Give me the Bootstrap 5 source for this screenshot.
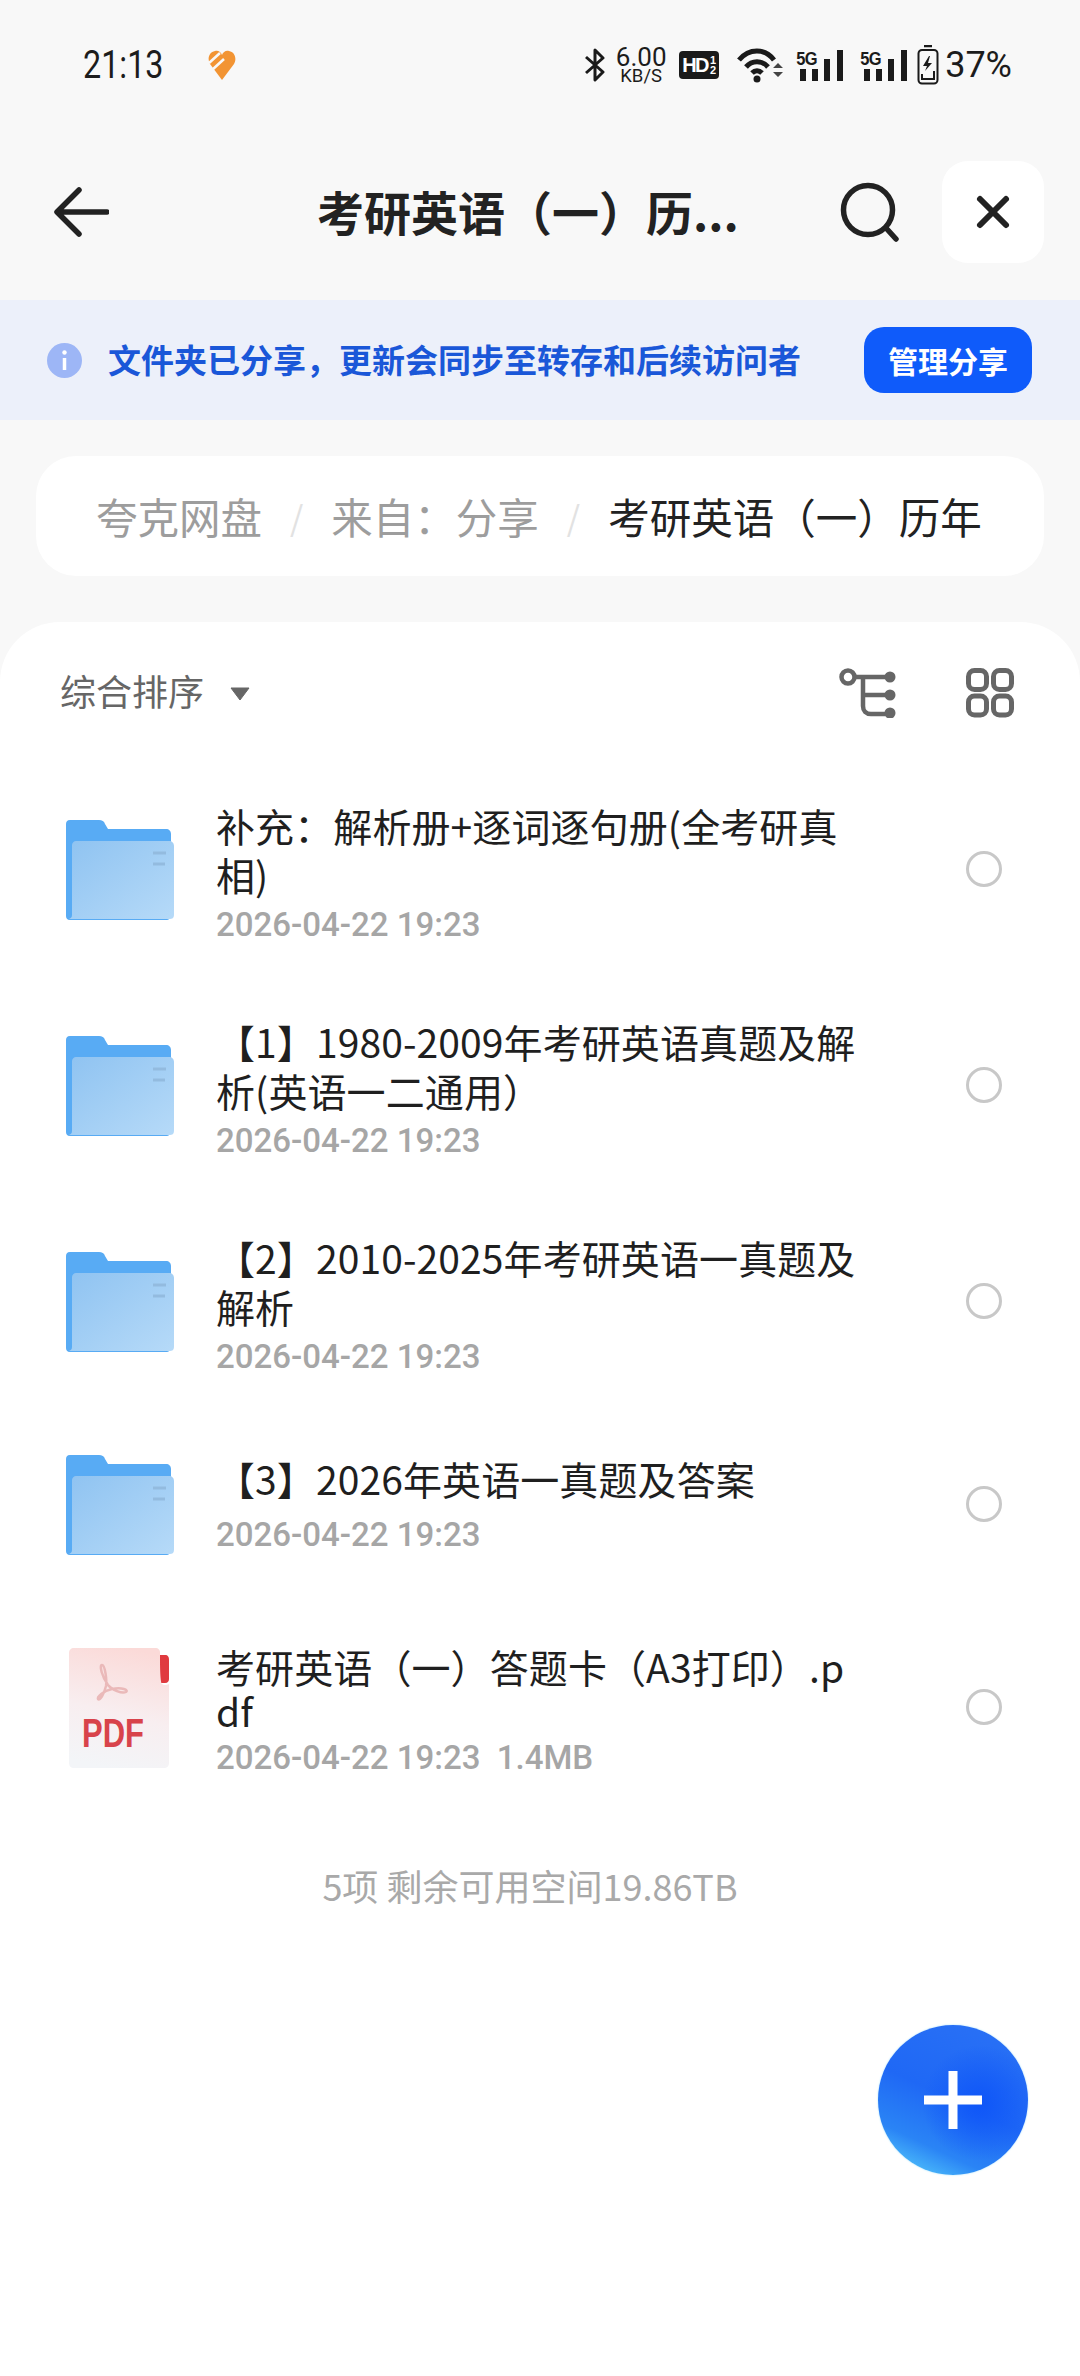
<!DOCTYPE html>
<html lang="zh-CN">
<head>
    <meta charset="UTF-8">
    <meta name="viewport" content="width=device-width, initial-scale=1.0">
    <title>考研英语（一）历年</title>
    <link href="https://cdn.jsdelivr.net/npm/bootstrap@5.3.3/dist/css/bootstrap.min.css" rel="stylesheet">
    <style>
        body {
            background: #f8f8f8;
            color: #222;
            font-family: "Noto Sans CJK SC", "Noto Sans", sans-serif;
            overflow: hidden;
        }
        .page-wrap { height: 2376px; }

        /* status bar */
        .status-bar { height: 124px; padding: 6px 68px 0 83px; }
        .status-time { font-family: Roboto, sans-serif; font-size: 38px; width: 125px; color: #1c1c1c; transform: scaleX(.85); transform-origin: left center; }
        .status-right { gap: 12px; }
        .speed { font-family: Roboto, sans-serif; width: 52px; margin-left: -3px; color: #1c1c1c; }
        .speed-num { font-size: 26px; line-height: 21px; }
        .speed-unit { font-size: 18.5px; line-height: 16px; }
        .hd-badge {
            width: 40px; height: 28px; background: #1a1a1a; color: #fff; border-radius: 4px; overflow: hidden;
            font: 700 20px/28px "Liberation Sans", sans-serif; letter-spacing: -1.5px;
        }
        .hd-frac { font-size: 11px; line-height: 10px; letter-spacing: 0; margin-left: 2px; }
        .wifi-ico { margin-left: 6px; }
        .sig-wrap { width: 48px; height: 32px; margin-left: 1px; }
        .sig-wrap + .sig-wrap { margin-left: 4px; }
        .sig-label { font: 700 16.5px/1 "Liberation Sans", sans-serif; left: 0; top: 0; letter-spacing: -.5px; color: #1a1a1a; transform: scaleY(1.15); transform-origin: left top; }
        .batt-ico { margin-left: -3px; }
        .batt-text { font-family: Roboto, sans-serif; font-size: 36px; color: #1c1c1c; margin-left: -6px; }

        /* title bar */
        .title-bar { height: 176px; padding: 0 36px 0 53px; }
        .page-title { font-size: 47px; font-weight: 700; margin-top: -2px; margin-left: 208px; width: 480px; white-space: nowrap; }
        .close-btn { width: 102px; height: 102px; border-radius: 26px; background: #fff; margin-left: 42px; }

        /* share banner */
        .share-bar { height: 120px; background: #ecf0fa; padding: 0 48px 0 47px; }
        .share-text { color: #1a57d8; font-size: 33px; font-weight: 700; margin-left: 26px; }
        .share-btn {
            width: 168px; height: 66px; background: #0f5bfa; color: #fff; border-radius: 20px; border: 0;
            font-size: 30px; font-weight: 700; padding: 0; white-space: nowrap;
        }

        /* breadcrumb */
        .path-bar {
            height: 120px; margin: 36px 36px 0; background: #fff; border-radius: 40px; padding: 0 60px;
            font-size: 41.5px; white-space: nowrap;
        }
        .path-muted { color: #9d9d9d; }
        .path-sep { color: #e2e2e2; font-size: 34px; margin: 0 28px; }
        .path-on { color: #222; }

        /* file sheet */
        .file-sheet { background: #fff; border-radius: 60px 60px 0 0; margin-top: 46px; }
        .sort-row { height: 142px; padding: 0 66px 0 60px; color: #666; font-size: 36px; }
        .sort-label { margin-top: -6px; }
        .sort-arrow { margin-left: 26px; }
        .grid-ico { margin-left: 69px; }
        .file-list { margin-top: -2px; }
        .file-row { height: 216px; padding: 0 78px 0 66px; border: 0; }
        .file-row.single { height: 190px; }
        .file-row.single .file-info { margin-top: 0; }
        .file-row.single .file-date { margin-top: 10px; }
        .file-row.tight .file-name { line-height: 44px; }
        .file-icon { width: 108px; flex: none; }
        .file-info { width: 648px; margin: 8px 0 0 42px; }
        .file-name { font-size: 39px; line-height: 49px; color: #1f1f1f; letter-spacing: .1px; word-break: break-all; }
        .file-date { font-family: Roboto, sans-serif; font-size: 33px; font-weight: 500; line-height: 44px; margin-top: 4px; color: #a6a6a6; white-space: pre; }
        .pick-dot { width: 36px; height: 36px; border: 3px solid #c8c8c8; border-radius: 50%; flex: none; margin: -2px 0 0 auto; }
        .list-foot { font-size: 36px; color: #a9a9a9; margin-top: 42px; padding-right: 20px; }
        .add-btn {
            width: 150px; height: 150px; right: 52px; bottom: 201px; border-radius: 50%;
            background:
                radial-gradient(circle at 68% 52%, #0f56f8 0%, rgba(15, 86, 248, 0) 45%),
                linear-gradient(25deg, #53c8fb 6%, #2a84f5 24%, #1f68f5 50%, #2b72f5 100%);
            box-shadow: 0 0 2px #9fe0fb;
        }
    </style>
</head>
<body>
<svg width="0" height="0" class="position-absolute">
    <defs>
        <linearGradient id="folderFront" x1="0" y1="0" x2="1" y2="1">
            <stop offset="0" stop-color="#8fc3f1"/>
            <stop offset="1" stop-color="#b6daf8"/>
        </linearGradient>
        <linearGradient id="pdfPaper" x1="0.6" y1="0" x2="0.4" y2="1">
            <stop offset="0" stop-color="#fbdad8"/>
            <stop offset=".55" stop-color="#f8eef0"/>
            <stop offset="1" stop-color="#f3f5f8"/>
        </linearGradient>
        <symbol id="folder" viewBox="0 0 108 100">
            <path d="M4 0h29c3 0 5 1 6 4l3 5h58c3 0 5 2 5 5v81c0 3-2 5-5 5H4c-3 0-4-2-4-4V4c0-2 1-4 4-4z" fill="#58abf4"/>
            <path d="M10 21h93c3 0 5 2 5 5v69c0 3-2 4-4 4H3c3-1 3-3 3-5V25c0-2 2-4 4-4z" fill="url(#folderFront)"/>
            <path d="M87 33h13M87 44h12" stroke="#93bbdf" stroke-width="3"/>
        </symbol>
    </defs>
</svg>

<div class="page-wrap d-flex flex-column">
    <!-- status bar -->
    <div class="status-bar d-flex align-items-center">
        <span class="status-time">21:13</span>
        <svg width="28" height="30" viewBox="0 0 28 30"><path d="M14 30L2 14C-1 9 1 2 7 1c3-1 6 1 7 4 1-3 4-5 7-4 6 1 8 8 5 13z" fill="#f29433"/><path d="M1 13L12 3M4 20L16 9" stroke="#f8f8f8" stroke-width="2.6"/></svg>
        <div class="status-right d-flex align-items-center ms-auto">
            <svg width="22" height="34" viewBox="0 0 22 34"><path d="M2 9l17 15-8 8V2l8 8L2 25" fill="none" stroke="#1a1a1a" stroke-width="3" stroke-linejoin="round"/></svg>
            <div class="speed text-center"><div class="speed-num">6.00</div><div class="speed-unit">KB/S</div></div>
            <div class="hd-badge d-flex align-items-center justify-content-center">HD<span class="hd-frac">1<br>2</span></div>
            <svg class="wifi-ico" width="46" height="36" viewBox="0 0 46 36">
                <path d="M2 13c10-12 26-12 35 0M9 20c6-7 16-7 22 0M15 26c3-3 7-3 10 0" fill="none" stroke="#1a1a1a" stroke-width="5"/>
                <circle cx="20" cy="32" r="3.5" fill="#1a1a1a"/>
                <path d="M36 21l5-5 5 5zM36 25h10l-5 5z" fill="#444"/>
            </svg>
            <div class="sig-wrap position-relative">
                <span class="sig-label position-absolute">5G</span>
                <svg class="d-block" width="48" height="32" viewBox="0 0 48 32"><path d="M4 20h6v12H4zM16 20h6v12h-6zM28 10h6v22h-6zM41 1h6v31h-6z" fill="#1a1a1a"/></svg>
            </div>
            <div class="sig-wrap position-relative">
                <span class="sig-label position-absolute">5G</span>
                <svg class="d-block" width="48" height="32" viewBox="0 0 48 32"><path d="M4 20h6v12H4zM16 20h6v12h-6zM28 10h6v22h-6zM41 1h6v31h-6z" fill="#1a1a1a"/></svg>
            </div>
            <svg class="batt-ico" width="22" height="40" viewBox="0 0 22 40"><path d="M7 1h8" stroke="#1a1a1a" stroke-width="2.5"/><rect x="1.5" y="5" width="19" height="33.5" rx="3.5" fill="none" stroke="#1a1a1a" stroke-width="2"/><path d="M12 11l-6 10h4l-2 5 7-8h-4l2-7z" fill="#1a1a1a"/><path d="M5 29v5h12v-8" fill="none" stroke="#1a1a1a" stroke-width="2"/></svg>
            <span class="batt-text">37%</span>
        </div>
    </div>

    <!-- title bar -->
    <div class="title-bar d-flex align-items-center">
        <svg width="56" height="50" viewBox="0 0 56 50"><path d="M26 3L4 25l22 22M5 25h49" fill="none" stroke="#222" stroke-width="5.5" stroke-linecap="round" stroke-linejoin="round"/></svg>
        <div class="page-title">考研英语（一）历...</div>
        <svg width="60" height="60" viewBox="0 0 60 60" class="ms-auto"><circle cx="28" cy="28" r="24.5" fill="none" stroke="#222" stroke-width="5.5"/><path d="M46 46l10 11" stroke="#222" stroke-width="5.5" stroke-linecap="round"/></svg>
        <div class="close-btn d-flex align-items-center justify-content-center">
            <svg width="36" height="36" viewBox="0 0 36 36"><path d="M5 5l26 26M31 5L5 31" stroke="#222" stroke-width="6" stroke-linecap="round"/></svg>
        </div>
    </div>

    <!-- share banner -->
    <div class="share-bar d-flex align-items-center">
        <svg width="35" height="35" viewBox="0 0 35 35"><circle cx="17.5" cy="17.5" r="17.5" fill="#9db6f6"/><path d="M17.5 15v12" stroke="#fff" stroke-width="3.5"/><circle cx="17.5" cy="9.5" r="2.2" fill="#fff"/></svg>
        <div class="share-text">文件夹已分享，更新会同步至转存和后续访问者</div>
        <button class="share-btn btn ms-auto" type="button">管理分享</button>
    </div>

    <!-- breadcrumb -->
    <div class="path-bar d-flex align-items-center">
        <span class="path-muted">夸克网盘</span><span class="path-sep">/</span><span class="path-muted">来自：分享</span><span class="path-sep">/</span><span class="path-on">考研英语（一）历年</span>
    </div>

    <!-- files -->
    <div class="file-sheet flex-grow-1 position-relative">
        <div class="sort-row d-flex align-items-center">
            <span class="sort-label">综合排序</span>
            <svg class="sort-arrow" width="20" height="15" viewBox="0 0 20 15"><path d="M1 2h18l-9 12z" fill="#666" stroke="#666" stroke-width="1" stroke-linejoin="round"/></svg>
            <svg class="ms-auto" width="58" height="50" viewBox="0 0 58 50"><circle cx="9" cy="9" r="6.5" fill="none" stroke="#666" stroke-width="4.5"/><path d="M15 9h36M24 9v29c0 5 3 8 8 8h19M24 27h27" fill="none" stroke="#666" stroke-width="4.5"/><circle cx="51" cy="9" r="5.5" fill="#666"/><circle cx="51" cy="27" r="5.5" fill="#666"/><circle cx="51" cy="45" r="5.5" fill="#666"/></svg>
            <svg class="grid-ico" width="48" height="50" viewBox="0 0 48 50"><g fill="none" stroke="#666" stroke-width="5"><rect x="2.5" y="2.5" width="18" height="19" rx="6"/><rect x="27.5" y="2.5" width="18" height="19" rx="6"/><rect x="2.5" y="28" width="18" height="19" rx="6"/><rect x="27.5" y="28" width="18" height="19" rx="6"/></g></svg>
        </div>

        <div class="list-group list-group-flush file-list" id="file-list"></div>

        <div class="list-foot text-center">5项 剩余可用空间19.86TB</div>

        <div class="add-btn position-absolute d-flex align-items-center justify-content-center">
            <svg width="58" height="58" viewBox="0 0 58 58"><path d="M29 0v58M0 29h58" stroke="#fff" stroke-width="9"/></svg>
        </div>
    </div>
</div>

<script src="https://cdn.jsdelivr.net/npm/bootstrap@5.3.3/dist/js/bootstrap.bundle.min.js"></script>
<script>
    // file rows
    const files = [
        { name: "补充：解析册+逐词逐句册(全考研真相)", date: "2026-04-22 19:23" },
        { name: "【1】1980-2009年考研英语真题及解析(英语一二通用）", date: "2026-04-22 19:23" },
        { name: "【2】2010-2025年考研英语一真题及解析", date: "2026-04-22 19:23" },
        { name: "【3】2026年英语一真题及答案", date: "2026-04-22 19:23", extra: " single" },
        { name: "考研英语（一）答题卡（A3打印）.pdf", date: "2026-04-22 19:23  1.4MB", pdf: true, extra: " tight" }
    ];

    const folderIcon = `<svg width="108" height="100" class="d-block"><use href="#folder"/></svg>`;
    const pdfIcon = `<svg width="108" height="122" viewBox="0 0 108 122" class="d-block">
        <path d="M93 8h6c3 0 4 2 4 5v19c0 2-1 4-4 4h-6z" fill="#e03a3f"/>
        <path d="M8 1h82c2 0 4 2 4 4v6c0 2 0 24 2 26 3 2 7 0 7 0v79c0 3-2 5-5 5H8c-3 0-5-2-5-5V6c0-3 2-5 5-5z" fill="url(#pdfPaper)"/>
        <path d="M36 18c-3 0 0 12 6 20 4 5 14 9 18 7 3-2-4-5-14-3-9 2-15 8-14 10 2 2 6-5 8-13 1-6-1-21-4-21z" fill="none" stroke="#eab9b9" stroke-width="2.5"/>
        <text x="16" y="100" font-family="Liberation Sans, sans-serif" font-size="41" font-weight="700" fill="#d8434b" textLength="62" lengthAdjust="spacingAndGlyphs">PDF</text>
    </svg>`;

    function renderFiles() {
        const list = document.getElementById("file-list");
        files.forEach(file => {
            const row = document.createElement("div");
            row.className = "list-group-item file-row d-flex align-items-center" + (file.extra || "");
            row.innerHTML = `
                <div class="file-icon">${file.pdf ? pdfIcon : folderIcon}</div>
                <div class="file-info">
                    <div class="file-name">${file.name}</div>
                    <div class="file-date">${file.date}</div>
                </div>
                <span class="pick-dot"></span>`;
            list.appendChild(row);
        });
    }

    renderFiles();
</script>
</body>
</html>
